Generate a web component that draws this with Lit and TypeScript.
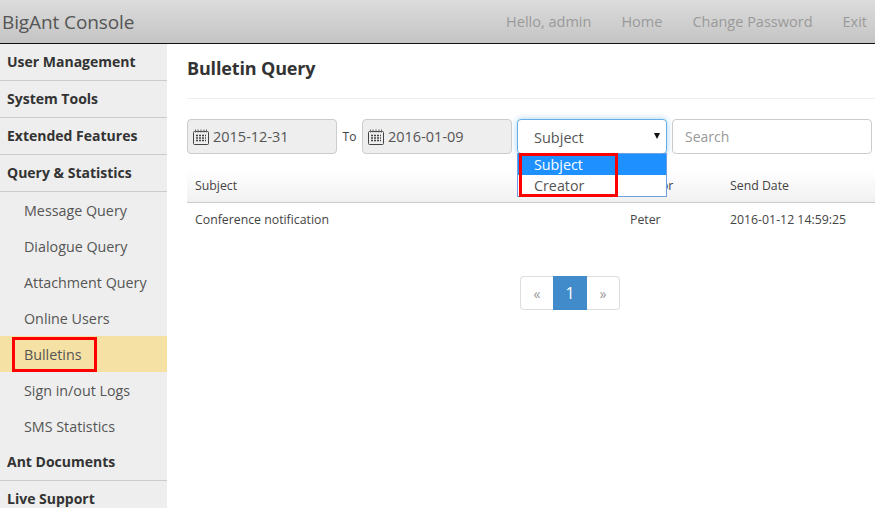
import { LitElement, html, css } from "lit";
import { customElement } from "lit/decorators.js";

const cal = html`<svg class="cal" width="16" height="16" viewBox="0 0 16 16" fill="none" stroke="#444" stroke-width="1">
  <rect x="0.5" y="2.5" width="15" height="13" rx="1"></rect>
  <path d="M2.5 0.5v3M5 0.5v3M8 0.5v3M11 0.5v3M13.5 0.5v3" stroke="#666"></path>
  <path d="M3 6.5h10M3 9h10M3 11.5h10" stroke="#444" stroke-width="1.6" stroke-dasharray="2 1"></path>
</svg>`;

@customElement("app-root")
export class AppRoot extends LitElement {
  static styles = css`
    :host { display: block; width: 875px; height: 508px; overflow: hidden; position: relative; background: #fff;
      font-family: "Open Sans", "Noto Sans", "Liberation Sans", sans-serif; color: #333; font-size: 14px; }
    * { box-sizing: border-box; }
    .top { height: 44px; border-bottom: 1px solid #111; background: linear-gradient(#dcdcdc, #c4c4c4);
      display: flex; align-items: center; padding: 0 8px 0 2px; }
    .brand { font-size: 19px; color: #555; flex: 1; letter-spacing: -0.1px; }
    .top nav { display: flex; gap: 30px; font-size: 14.5px; color: #9a9a9a; }
    .body { display: flex; height: 464px; }
    .side { width: 167px; flex: none; background: #eee; overflow: hidden; }
    .grp { height: 37px; border-bottom: 1px solid #ccc; padding: 0 7px 2px; display: flex; align-items: center;
      font-weight: 700; font-size: 14px; color: #333; }
    .sub { height: 36px; display: flex; align-items: center; padding-left: 24px; font-size: 14.3px; color: #555; }
    .sub.on { background: #f5e1a4; }
    main { flex: 1; min-width: 0; padding: 0 0 0 20px; overflow: hidden; }
    h1 { margin: 0; height: 55px; border-bottom: 1px solid #eee; font-size: 18px; font-weight: 700; color: #333;
      display: flex; align-items: center; padding-bottom: 7px; letter-spacing: -0.15px; }
    .filters { display: flex; align-items: center; margin-top: 20px; height: 35px; }
    .field { width: 150px; height: 35px; border: 1px solid #ccc; border-radius: 4px; font-size: 14.5px; color: #555;
      display: flex; align-items: center; padding-left: 5px; gap: 4px; background: #eee; }
    .cal { flex: none; }
    .to { width: 25px; text-align: center; font-size: 12px; color: #444; }
    .selwrap { position: relative; margin-left: 5px; width: 150px; height: 35px; }
    .sel { width: 150px; height: 35px; border: 1px solid #66afe9; border-radius: 4px; background: #fff; color: #555; font-size: 14.5px;
      box-shadow: 0 0 6px rgba(102,175,233,.6); display: flex; align-items: center; padding: 1px 0 0 16px; position: relative; }
    .caret { position: absolute; right: 6px; top: 13px; width: 0; height: 0; border-left: 3.5px solid transparent;
      border-right: 3.5px solid transparent; border-top: 6px solid #111; }
    .opts { position: absolute; left: 0; top: 34px; width: 150px; border: 1px solid #6f9fe0; background: #fff; z-index: 2; }
    .opt { height: 21px; display: flex; align-items: center; padding-left: 16px; color: #555; font-size: 14.3px; }
    .opt.on { background: #1e90ff; color: #fff; }
    .search { margin-left: 5px; width: 200px; height: 35px; border: 1px solid #ccc; border-radius: 4px; display: flex;
      align-items: center; padding-left: 12px; color: #999; background: #fff; }
    .thead, .row { display: grid; grid-template-columns: 435px 100px 1fr; font-size: 12.3px; color: #444; padding-left: 8px; width: 688px; }
    .thead { margin-top: 16px; height: 33px; border-bottom: 1px solid #ccc; align-items: center; padding-bottom: 2px; background: linear-gradient(#fff, #f1f1f1); }
    .row { height: 34px; align-items: center; padding-bottom: 2px; }
    .pager { display: flex; justify-content: center; width: 766px; margin-top: 39px; height: 34px; }
    .pager span { display: flex; align-items: center; justify-content: center; height: 34px; border: 1px solid #ddd; color: #999; font-size: 14px; background: #fff; }
    .pager .a { width: 33px; border-radius: 4px 0 0 4px; border-right: 0; }
    .pager .b { width: 34px; background: #428bca; border-color: #428bca; color: #fff; font-size: 16px; }
    .pager .c { width: 33px; border-radius: 0 4px 4px 0; border-left: 0; }
    .mark { position: absolute; border: 3px solid #f00; z-index: 3; pointer-events: none; }
    .m1 { left: 12px; top: 337px; width: 85px; height: 35px; }
    .m2 { left: 519px; top: 153px; width: 99px; height: 44px; }
  `;

  render() {
    return html`
      <div class="top">
        <div class="brand">BigAnt Console</div>
        <nav><span>Hello, admin</span><span>Home</span><span>Change Password</span><span>Exit</span></nav>
      </div>
      <div class="body">
        <aside class="side">
          <div class="grp">User Management</div>
          <div class="grp">System Tools</div>
          <div class="grp">Extended Features</div>
          <div class="grp">Query &amp; Statistics</div>
          <div class="sub">Message Query</div>
          <div class="sub">Dialogue Query</div>
          <div class="sub">Attachment Query</div>
          <div class="sub">Online Users</div>
          <div class="sub on">Bulletins</div>
          <div class="sub">Sign in/out Logs</div>
          <div class="sub">SMS Statistics</div>
          <div class="grp">Ant Documents</div>
          <div class="grp">Live Support</div>
        </aside>
        <main>
          <h1>Bulletin Query</h1>
          <div class="filters">
            <div class="field">${cal}<span>2015-12-31</span></div>
            <div class="to">To</div>
            <div class="field">${cal}<span>2016-01-09</span></div>
            <div class="selwrap">
              <div class="sel">Subject<i class="caret"></i></div>
              <div class="opts"><div class="opt on">Subject</div><div class="opt">Creator</div></div>
            </div>
            <div class="search">Search</div>
          </div>
          <div class="thead"><span>Subject</span><span>Creator</span><span>Send Date</span></div>
          <div class="row"><span>Conference notification</span><span>Peter</span><span>2016-01-12 14:59:25</span></div>
          <div class="pager"><span class="a">«</span><span class="b">1</span><span class="c">»</span></div>
        </main>
      </div>
      <div class="mark m1"></div>
      <div class="mark m2"></div>
    `;
  }
}
